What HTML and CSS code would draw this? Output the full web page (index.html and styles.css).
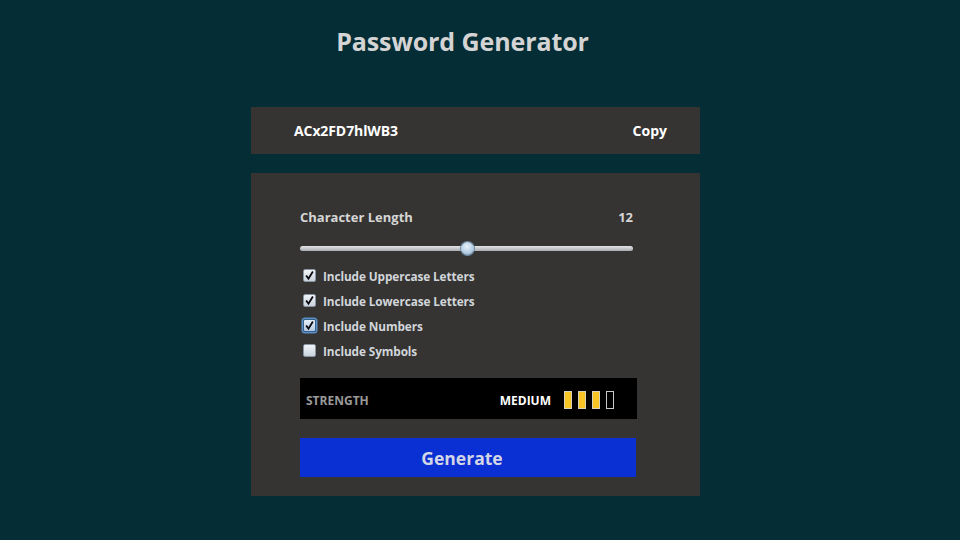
FILE: index.html
```html
<!DOCTYPE html>
<html lang="en">
<head>
<meta charset="utf-8">
<title>Password Generator</title>
<link rel="stylesheet" href="styles.css">
</head>
<body>
<main class="app">
  <h1 class="title">Password Generator</h1>
  <section class="result">
    <span class="password">ACx2FD7hlWB3</span>
    <button class="copy">Copy</button>
  </section>
  <section class="settings">
    <div class="length-row">
      <span class="label">Character Length</span>
      <span class="value">12</span>
    </div>
    <div class="slider">
      <div class="track"></div>
      <div class="thumb" style="left: 50%"></div>
    </div>
    <ul class="options">
      <li class="option"><span class="box checked"><svg viewBox="0 0 13 13"><path d="M2.5 6.5 L5.3 10.2 L10.5 1.8" /></svg></span>Include Uppercase Letters</li>
      <li class="option"><span class="box checked"><svg viewBox="0 0 13 13"><path d="M2.5 6.5 L5.3 10.2 L10.5 1.8" /></svg></span>Include Lowercase Letters</li>
      <li class="option"><span class="box checked focus"><svg viewBox="0 0 13 13"><path d="M2.5 6.5 L5.3 10.2 L10.5 1.8" /></svg></span>Include Numbers</li>
      <li class="option"><span class="box"></span>Include Symbols</li>
    </ul>
    <div class="strength">
      <span class="strength-label">STRENGTH</span>
      <div class="strength-level">
        <span class="level-text">MEDIUM</span>
        <span class="bar on"></span>
        <span class="bar on"></span>
        <span class="bar on"></span>
        <span class="bar"></span>
      </div>
    </div>
    <button class="generate">Generate</button>
  </section>
</main>
</body>
</html>
```
FILE: styles.css
```css
html, body {
  margin: 0;
  padding: 0;
}
body {
  width: 960px;
  height: 540px;
  background: #052d35;
  font-family: "Open Sans", "Noto Sans", sans-serif;
  font-weight: 700;
  overflow: hidden;
}
.app {
  width: 449px;
  margin-left: 251px;
  display: flex;
  flex-direction: column;
}
.title {
  margin: 22px 0 0 0;
  padding-right: 26px;
  text-align: center;
  font-size: 25px;
  line-height: 38px;
  color: #d4d4d4;
  font-weight: 700;
  letter-spacing: -0.1px;
}
.result {
  margin-top: 47px;
  height: 47px;
  background: #353432;
  display: flex;
  align-items: center;
  justify-content: space-between;
  padding: 0 33px 0 43px;
}
.password {
  color: #ffffff;
  font-size: 14px;
  letter-spacing: -0.1px;
}
.copy {
  background: none;
  border: none;
  padding: 0;
  color: #ffffff;
  font-family: inherit;
  font-weight: 700;
  font-size: 14px;
}
.settings {
  margin-top: 19px;
  height: 323px;
  box-sizing: border-box;
  background: #353432;
  padding: 33px 63px 0 49px;
  display: flex;
  flex-direction: column;
}
.length-row {
  display: flex;
  justify-content: space-between;
  align-items: center;
  padding-right: 4px;
  color: #d6d6d6;
  font-size: 13px;
  height: 22px;
}
.slider {
  position: relative;
  margin-top: 14px;
  height: 13px;
  width: 333px;
}
.track {
  margin-top: 4px;
  height: 5px;
  border-radius: 3px;
  background: linear-gradient(#e2e4e6, #a9adb2);
}
.thumb {
  position: absolute;
  top: 0;
  width: 13px;
  height: 13px;
  margin-left: -6px;
  border-radius: 50%;
  background: radial-gradient(circle at 45% 35%, #e8f2fa 0%, #b5cde2 55%, #7f9fbc 100%);
  box-shadow: 0 0 0 1px #6d8aa5;
}
.options {
  list-style: none;
  margin: 13px 0 0 0;
  padding: 0 0 0 3px;
  display: flex;
  flex-direction: column;
  gap: 10px;
}
.option {
  display: flex;
  align-items: center;
  height: 15px;
  color: #d2d6da;
  font-size: 11.8px;
  letter-spacing: -0.1px;
}
.box {
  width: 11px;
  height: 11px;
  margin-right: 7px;
  border: 1px solid #8a96a3;
  border-radius: 2px;
  background: linear-gradient(#f2f5f8, #c9d2dc);
  display: flex;
  align-items: center;
  justify-content: center;
}
.box svg {
  width: 11px;
  height: 11px;
  fill: none;
  stroke: #0c0c10;
  stroke-width: 2.2;
}
.box.focus {
  box-shadow: 0 0 0 1.5px #5b8fc6;
  border-color: #34628f;
  background: linear-gradient(#e6f0fa, #b3c9e0);
}
.strength {
  margin-top: 20px;
  height: 41px;
  width: 337px;
  background: #000000;
  display: flex;
  align-items: center;
  justify-content: space-between;
  padding: 3px 0 0 6px;
  box-sizing: border-box;
}
.strength-label {
  color: #9a9a9a;
  font-size: 12px;
}
.strength-level {
  display: flex;
  align-items: center;
  gap: 6px;
  padding-right: 23px;
}
.level-text {
  color: #ffffff;
  font-size: 12px;
  margin-right: 7px;
}
.bar {
  width: 6px;
  height: 16px;
  border: 1px solid #c9c9c9;
  background: transparent;
}
.bar.on {
  background: #f6c423;
  border-color: #d8d2b8;
}
.generate {
  margin-top: 19px;
  height: 39px;
  width: 336px;
  border: none;
  background: #0a2fd3;
  color: #d3d6e6;
  font-family: inherit;
  font-weight: 700;
  font-size: 17.5px;
  padding: 0 12px 0 0;
}
```
